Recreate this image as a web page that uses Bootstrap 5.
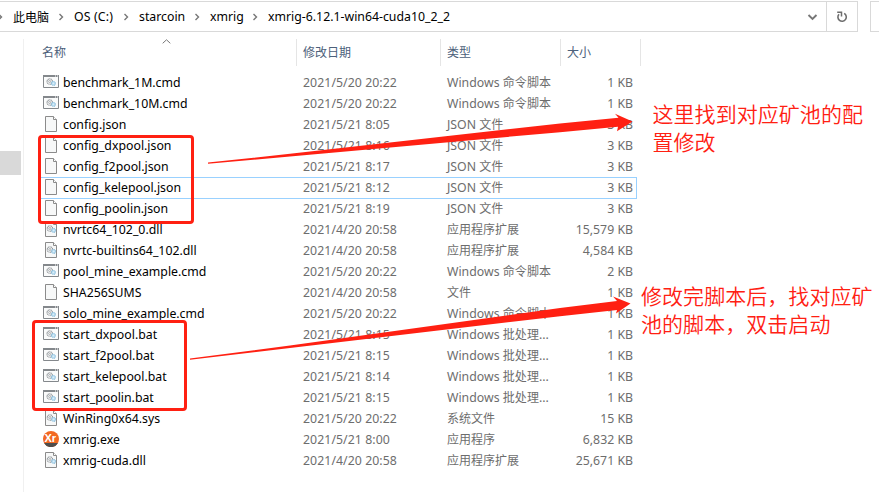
<!DOCTYPE html>
<html lang="zh-CN">
<head>
<meta charset="utf-8">
<meta name="viewport" content="width=device-width, initial-scale=1">
<title>xmrig-6.12.1-win64-cuda10_2_2</title>
<link href="https://cdn.jsdelivr.net/npm/bootstrap@5.3.0/dist/css/bootstrap.min.css" rel="stylesheet">
<style>
html,body{height:492px}
body{font:12.3px/21px "Noto Sans","Noto Sans CJK SC",sans-serif;color:#000;white-space:nowrap}
.cjk{font-family:"Noto Sans CJK SC",sans-serif;font-size:12px}
.address-row{height:32px;padding-top:1px}
.address-box{width:858px;height:31px;border:1px solid #d9d9d9;border-left:0}
.search-box{width:9px;height:31px;border:1px solid #d9d9d9;border-right:0}
.crumb-sep{width:25px}
.c-os{width:40px}.c-star{width:46px}.c-x{width:33px}
.c-os{letter-spacing:.15px}
.refresh{width:31px;border-left:1px solid #d9d9d9}
.side-pane{width:24px;border-right:1px solid #f0f0f0;margin-top:7px}
.side-thumb{width:21px;height:24px;background:#d9d9d9;margin-top:112px}
.main-area{height:460px}
.head-row{height:27px;margin-top:7px;color:#4c607a}
.head-row>div{border-right:1px solid #e5e5e5;padding-left:6px;line-height:26px}
.sort-mark{left:138px;top:0}
.col-name{width:273px}.col-date{width:144px}.col-type{width:120px}.col-size{width:80px}
.head-row>.col-name{padding-left:18px}
.file-list{margin-top:6px;padding-left:15px}
.file-row{width:598px;height:21px;padding-left:4px;color:#6d6d6d}
.file-row.picked{height:22px;margin-bottom:-1px;border:1px solid #99d1ff;padding-left:3px;padding-bottom:1px}
.file-row svg{width:16px;height:16px;margin:0 4px 1px 0}
.fname{width:240px;color:#000}
.fdate{width:144px;letter-spacing:.06px}.ftype{width:120px;height:21px;line-height:21px}.ftype.cjk{line-height:20px}.fsize{width:66px;text-align:right}
.ftype .cjk{line-height:1;letter-spacing:.1px}
.red-frame{border:3px solid #ff2012;border-radius:4px}
.frame-a{left:38px;top:135px;width:156px;height:89px}
.frame-b{left:32px;top:320px;width:155px;height:91px}
.note{color:#ff2012;font:350 21px/28px "Noto Sans CJK SC",sans-serif;letter-spacing:.05px}
.note-a{left:652.5px;top:99px}
.note-b{left:641px;top:281px}
</style>
<script src="https://cdn.jsdelivr.net/npm/bootstrap@5.3.0/dist/js/bootstrap.bundle.min.js"></script>
</head>
<body class="bg-white overflow-hidden position-relative">
<svg class="d-none">
  <symbol id="gears" viewBox="0 0 10 8">
    <circle cx="3.7" cy="3.5" r="2.7" fill="#eef1f3" stroke="#909497" stroke-width="1.1" stroke-dasharray="1 .5"/>
    <circle cx="3.7" cy="3.5" r="1" fill="#fff" stroke="#909497" stroke-width=".7"/>
    <circle cx="7.4" cy="5.4" r="1.8" fill="#d9effa" stroke="#7ab5d8" stroke-width="1.2" stroke-dasharray=".9 .4"/>
  </symbol>
  <symbol id="script" viewBox="0 0 16 16">
    <path d="M.5 1.5h15v12H.5z" fill="#fafbfb" stroke="#84888c"/>
    <path d="M0 1h16v2H0z" fill="#84888c"/><path d="M12 1.5h1v1h-1zM14 1.5h1v1h-1z" fill="#fff"/>
    <use href="#gears" x="3" y="4" width="10" height="8"/>
  </symbol>
  <symbol id="page" viewBox="0 0 16 16">
    <path d="M2.5 .5h8l3 3v12h-11z" fill="#f7f8f8" stroke="#8b8b8b"/><path d="M10.5 .5v3h3" fill="#fff" stroke="#8b8b8b"/>
  </symbol>
  <symbol id="lib" viewBox="0 0 16 16">
    <use href="#page" width="16" height="16"/><use href="#gears" x="3.2" y="4" width="10" height="8"/>
  </symbol>
  <symbol id="crumb" viewBox="0 0 6 8"><path d="M1.5 1l3 3-3 3" fill="none" stroke="#777" stroke-width="1.4"/></symbol>
</svg>

<div class="address-row d-flex justify-content-between">
  <div class="address-box d-flex">
    <nav class="d-flex align-items-center flex-grow-1" id="crumbs">
      <svg width="13" height="8" viewBox="3 0 13 8"><use href="#crumb" width="6" height="8"/></svg>
      <span class="cjk">此电脑</span><svg class="crumb-sep" height="8"><use href="#crumb" x="9" width="6" height="8"/></svg>
      <span class="c-os">OS (C:)</span><svg class="crumb-sep" height="8"><use href="#crumb" x="9" width="6" height="8"/></svg>
      <span class="c-star">starcoin</span><svg class="crumb-sep" height="8"><use href="#crumb" x="9" width="6" height="8"/></svg>
      <span class="c-x">xmrig</span><svg class="crumb-sep" height="8"><use href="#crumb" x="9" width="6" height="8"/></svg>
      <span class="c-dir">xmrig-6.12.1-win64-cuda10_2_2</span>
    </nav>
    <div class="d-flex align-items-center pe-2 me-0"><svg width="11" height="8" viewBox="0 0 11 8"><path d="M1.5 2l4 4 4-4" fill="none" stroke="#777" stroke-width="1.9"/></svg></div>
    <div class="refresh d-flex align-items-center justify-content-center"><svg width="12" height="12" viewBox="0 0 12 12"><path d="M8.2 2.4A4.2 4.2 0 1 1 3 3.2" fill="none" stroke="#6e6e6e" stroke-width="1.6"/><path d="M1.2 1.2h4.3v4.3" fill="none" stroke="#6e6e6e" stroke-width="1.5"/></svg></div>
  </div>
  <div class="search-box"></div>
</div>

<div class="main-area d-flex">
  <aside class="side-pane flex-shrink-0"><div class="side-thumb"></div></aside>
  <main>
    <div class="head-row d-flex cjk">
      <div class="col-name position-relative">名称<svg class="sort-mark position-absolute" width="9" height="5" viewBox="0 0 9 5"><path d="M.7 4.3L4.5.8l3.8 3.5" fill="none" stroke="#777"/></svg></div>
      <div class="col-date">修改日期</div><div class="col-type">类型</div><div class="col-size">大小</div>
    </div>
    <div class="file-list">
      <div class="file-row d-flex align-items-center"><svg><use href="#script"/></svg><span class="fname">benchmark_1M.cmd</span><span class="fdate">2021/5/20 20:22</span><span class="ftype">Windows <span class="cjk">命令脚本</span></span><span class="fsize">1 KB</span></div>
      <div class="file-row d-flex align-items-center"><svg><use href="#script"/></svg><span class="fname">benchmark_10M.cmd</span><span class="fdate">2021/5/20 20:22</span><span class="ftype">Windows <span class="cjk">命令脚本</span></span><span class="fsize">1 KB</span></div>
      <div class="file-row d-flex align-items-center"><svg><use href="#page"/></svg><span class="fname">config.json</span><span class="fdate">2021/5/21 8:05</span><span class="ftype">JSON <span class="cjk">文件</span></span><span class="fsize">3 KB</span></div>
      <div class="file-row d-flex align-items-center"><svg><use href="#page"/></svg><span class="fname">config_dxpool.json</span><span class="fdate">2021/5/21 8:16</span><span class="ftype">JSON <span class="cjk">文件</span></span><span class="fsize">3 KB</span></div>
      <div class="file-row d-flex align-items-center"><svg><use href="#page"/></svg><span class="fname">config_f2pool.json</span><span class="fdate">2021/5/21 8:17</span><span class="ftype">JSON <span class="cjk">文件</span></span><span class="fsize">3 KB</span></div>
      <div class="file-row picked d-flex align-items-center"><svg><use href="#page"/></svg><span class="fname">config_kelepool.json</span><span class="fdate">2021/5/21 8:12</span><span class="ftype">JSON <span class="cjk">文件</span></span><span class="fsize">3 KB</span></div>
      <div class="file-row d-flex align-items-center"><svg><use href="#page"/></svg><span class="fname">config_poolin.json</span><span class="fdate">2021/5/21 8:19</span><span class="ftype">JSON <span class="cjk">文件</span></span><span class="fsize">3 KB</span></div>
      <div class="file-row d-flex align-items-center"><svg><use href="#lib"/></svg><span class="fname">nvrtc64_102_0.dll</span><span class="fdate">2021/4/20 20:58</span><span class="ftype cjk">应用程序扩展</span><span class="fsize">15,579 KB</span></div>
      <div class="file-row d-flex align-items-center"><svg><use href="#lib"/></svg><span class="fname">nvrtc-builtins64_102.dll</span><span class="fdate">2021/4/20 20:58</span><span class="ftype cjk">应用程序扩展</span><span class="fsize">4,584 KB</span></div>
      <div class="file-row d-flex align-items-center"><svg><use href="#script"/></svg><span class="fname">pool_mine_example.cmd</span><span class="fdate">2021/5/20 20:22</span><span class="ftype">Windows <span class="cjk">命令脚本</span></span><span class="fsize">2 KB</span></div>
      <div class="file-row d-flex align-items-center"><svg><use href="#page"/></svg><span class="fname">SHA256SUMS</span><span class="fdate">2021/4/20 20:58</span><span class="ftype cjk">文件</span><span class="fsize">1 KB</span></div>
      <div class="file-row d-flex align-items-center"><svg><use href="#script"/></svg><span class="fname">solo_mine_example.cmd</span><span class="fdate">2021/5/20 20:22</span><span class="ftype">Windows <span class="cjk">命令脚本</span></span><span class="fsize">1 KB</span></div>
      <div class="file-row d-flex align-items-center"><svg><use href="#script"/></svg><span class="fname">start_dxpool.bat</span><span class="fdate">2021/5/21 8:15</span><span class="ftype">Windows <span class="cjk">批处理</span>...</span><span class="fsize">1 KB</span></div>
      <div class="file-row d-flex align-items-center"><svg><use href="#script"/></svg><span class="fname">start_f2pool.bat</span><span class="fdate">2021/5/21 8:15</span><span class="ftype">Windows <span class="cjk">批处理</span>...</span><span class="fsize">1 KB</span></div>
      <div class="file-row d-flex align-items-center"><svg><use href="#script"/></svg><span class="fname">start_kelepool.bat</span><span class="fdate">2021/5/21 8:14</span><span class="ftype">Windows <span class="cjk">批处理</span>...</span><span class="fsize">1 KB</span></div>
      <div class="file-row d-flex align-items-center"><svg><use href="#script"/></svg><span class="fname">start_poolin.bat</span><span class="fdate">2021/5/21 8:15</span><span class="ftype">Windows <span class="cjk">批处理</span>...</span><span class="fsize">1 KB</span></div>
      <div class="file-row d-flex align-items-center"><svg><use href="#lib"/></svg><span class="fname">WinRing0x64.sys</span><span class="fdate">2021/5/20 20:22</span><span class="ftype cjk">系统文件</span><span class="fsize">15 KB</span></div>
      <div class="file-row d-flex align-items-center"><svg viewBox="0 0 16 16"><circle cx="8" cy="8" r="8" fill="#f26822"/><path d="M1 12h14a8 8 0 0 1-14 0z" fill="#4d4d4d"/><text x="1.4" y="11.4" font-family="Liberation Sans, sans-serif" font-size="11" font-weight="700" fill="#fff">Xr</text></svg><span class="fname">xmrig.exe</span><span class="fdate">2021/5/21 8:00</span><span class="ftype cjk">应用程序</span><span class="fsize">6,832 KB</span></div>
      <div class="file-row d-flex align-items-center"><svg><use href="#lib"/></svg><span class="fname">xmrig-cuda.dll</span><span class="fdate">2021/4/20 20:58</span><span class="ftype cjk">应用程序扩展</span><span class="fsize">25,671 KB</span></div>
    </div>
  </main>
</div>

<div class="red-frame frame-a position-absolute"></div>
<div class="red-frame frame-b position-absolute"></div>
<svg class="position-absolute top-0 start-0" width="879" height="492" fill="#ff2012">
  <path d="M208 162.6L290 153.8 560 123.4 618.5 117.8 615 113.8 632.5 121.5 617 131.3 618 126.8 560 132.2 290 156.4 208 163.8z"/>
  <path d="M190 358.6L290 345.4 560 308 617 301 613 296.6 630.5 303.4 616 313.5 617 310 560 316.2 290 348 190 359.8z"/>
</svg>
<div class="note note-a position-absolute">这里找到对应矿池的配<br>置修改</div>
<div class="note note-b position-absolute">修改完脚本后，找对应矿<br>池的脚本，双击启动</div>
</body>
</html>
